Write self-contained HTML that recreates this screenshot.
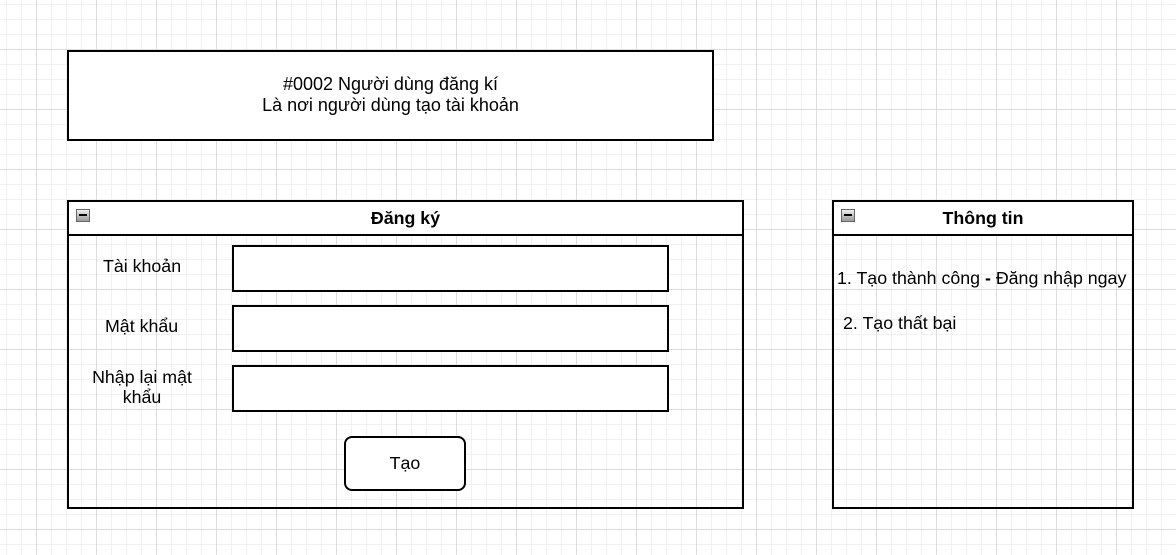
<!DOCTYPE html><html><head><style>
body{margin:0;width:1176px;height:555px;overflow:hidden;position:relative;font-family:"Liberation Sans",Arial,sans-serif;
background-color:#fff;
background-image:linear-gradient(90deg,#dcdcdc 1px,transparent 1px),linear-gradient(#dcdcdc 1px,transparent 1px),linear-gradient(90deg,#f1f1f1 1px,transparent 1px),linear-gradient(#f1f1f1 1px,transparent 1px);
background-size:60px 60px,60px 60px,15px 15px,15px 15px;
background-position:36px 0,0 49px,6px 0,0 4px;}
.a{position:absolute;box-sizing:border-box;}
.t{font-size:17.8px;color:#000;}
.min{position:absolute;left:7px;top:7px;width:14px;height:13px;background:linear-gradient(#f0f0f0,#999);border:1px solid #666;box-sizing:border-box}
.min:after{content:"";position:absolute;left:2px;right:2px;top:4px;height:2px;background:#000}
</style></head><body>
<div class="a t" style="left:67px;top:50px;width:647px;height:91px;border:2px solid #000;background:#fff;text-align:center;padding-top:22px;line-height:21px;font-size:18px">#0002 Người dùng đăng kí<br>Là nơi người dùng tạo tài khoản</div>

<div class="a" style="left:67px;top:200px;width:677px;height:309px;border:2px solid #000"></div>
<div class="a" style="left:67px;top:200px;width:677px;height:36px;border:2px solid #000;background:#fff;text-align:center;font-weight:bold;font-size:17.8px;line-height:33px">Đăng ký<div class="min"></div></div>
<div class="a t" style="left:103px;top:256px">Tài khoản</div>
<div class="a t" style="left:105px;top:316px">Mật khẩu</div>
<div class="a t" style="left:76px;top:367px;width:132px;text-align:center;line-height:20px">Nhập lại mật khẩu</div>
<div class="a" style="left:232px;top:245px;width:437px;height:47px;border:2px solid #000;background:#fff"></div>
<div class="a" style="left:232px;top:305px;width:437px;height:47px;border:2px solid #000;background:#fff"></div>
<div class="a" style="left:232px;top:365px;width:437px;height:47px;border:2px solid #000;background:#fff"></div>
<div class="a t" style="left:344px;top:436px;width:122px;height:55px;border:2px solid #000;border-radius:8px;background:#fff;text-align:center;line-height:50px">Tạo</div>

<div class="a" style="left:832px;top:200px;width:302px;height:309px;border:2px solid #000"></div>
<div class="a" style="left:832px;top:200px;width:302px;height:36px;border:2px solid #000;background:#fff;text-align:center;font-weight:bold;font-size:17.8px;line-height:33px">Thông tin<div class="min"></div></div>
<div class="a t" style="left:837px;top:268px;white-space:nowrap">1. Tạo thành công <b>-</b> Đăng nhập ngay</div>
<div class="a t" style="left:843px;top:313px">2. Tạo thất bại</div>
</body></html>
